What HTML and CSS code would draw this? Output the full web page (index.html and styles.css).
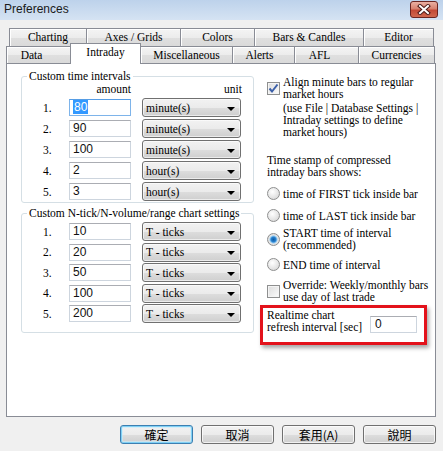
FILE: index.html
```html
<!DOCTYPE html>
<html lang="en">
<head>
    <meta charset="UTF-8">
    <title>Preferences</title>
    <link rel="stylesheet" href="styles.css">
</head>
<body>

    <!-- Title bar -->
    <div class="titlebar">
        <span class="title">Preferences</span>
        <div class="close-btn">
            <svg width="14" height="11" viewBox="0 0 14 11">
                <path d="M3 2 L11 9 M11 2 L3 9" stroke="#4a1a18" stroke-width="4" stroke-linecap="square"/>
                <path d="M3 2 L11 9 M11 2 L3 9" stroke="#fff" stroke-width="2" stroke-linecap="square"/>
            </svg>
        </div>
    </div>

    <!-- Tabs -->
    <div class="tabs">
        <div class="tab-row row-back">
            <div class="tab" style="width:78px">Charting</div>
            <div class="tab" style="width:95px">Axes / Grids</div>
            <div class="tab" style="width:75px">Colors</div>
            <div class="tab" style="width:110px">Bars &amp; Candles</div>
            <div class="tab" style="width:71px">Editor</div>
        </div>
        <div class="tab-row row-front">
            <div class="tab tab-data" style="width:65px">Data</div>
            <div class="tab active" style="width:71px">Intraday</div>
            <div class="tab" style="width:93px">Miscellaneous</div>
            <div class="tab tab-alerts" style="width:63px">Alerts</div>
            <div class="tab tab-afl" style="width:65px">AFL</div>
            <div class="tab" style="width:77px">Currencies</div>
        </div>
    </div>

    <div class="panel">
        <div class="col-left">

            <!-- Custom time intervals -->
            <fieldset class="group group-time">
                <legend>Custom time intervals</legend>
                <div class="group-body">
                    <div class="grid head">
                        <span></span>
                        <span class="right">amount</span>
                        <span class="right">unit</span>
                    </div>
                    <div class="grid rows">
                        <span class="num">1.</span>
                        <div class="field focused"><span class="selected">80</span></div>
                        <div class="combo"><span>minute(s)</span><i class="arrow"></i></div>

                        <span class="num">2.</span>
                        <div class="field">90</div>
                        <div class="combo"><span>minute(s)</span><i class="arrow"></i></div>

                        <span class="num">3.</span>
                        <div class="field">100</div>
                        <div class="combo"><span>minute(s)</span><i class="arrow"></i></div>

                        <span class="num">4.</span>
                        <div class="field">2</div>
                        <div class="combo"><span>hour(s)</span><i class="arrow"></i></div>

                        <span class="num">5.</span>
                        <div class="field">3</div>
                        <div class="combo"><span>hour(s)</span><i class="arrow"></i></div>
                    </div>
                </div>
            </fieldset>

            <!-- Custom N-tick settings -->
            <fieldset class="group group-tick">
                <legend>Custom N-tick/N-volume/range chart settings</legend>
                <div class="group-body">
                    <div class="grid rows">
                        <span class="num">1.</span>
                        <div class="field">10</div>
                        <div class="combo"><span>T - ticks</span><i class="arrow"></i></div>

                        <span class="num">2.</span>
                        <div class="field">20</div>
                        <div class="combo"><span>T - ticks</span><i class="arrow"></i></div>

                        <span class="num">3.</span>
                        <div class="field">50</div>
                        <div class="combo"><span>T - ticks</span><i class="arrow"></i></div>

                        <span class="num">4.</span>
                        <div class="field">100</div>
                        <div class="combo"><span>T - ticks</span><i class="arrow"></i></div>

                        <span class="num">5.</span>
                        <div class="field">200</div>
                        <div class="combo"><span>T - ticks</span><i class="arrow"></i></div>
                    </div>
                </div>
            </fieldset>
        </div>

        <div class="col-right">
            <div class="option">
                <span class="checkbox checked">
                    <svg width="11" height="11" viewBox="0 0 11 11">
                        <path d="M1.5 5.5 L4 8.5 L9.5 1.5" stroke="#3b5fa8" stroke-width="2" fill="none"/>
                    </svg>
                </span>
                <span>Align minute bars to regular<br>market hours</span>
            </div>
            <p class="note">(use File | Database Settings |<br>Intraday settings to define<br>market hours)</p>

            <p class="caption">Time stamp of compressed<br>intraday bars shows:</p>

            <div class="option radio-first">
                <span class="radio"></span>
                <span>time of FIRST tick inside bar</span>
            </div>
            <div class="option radio-last">
                <span class="radio"></span>
                <span>time of LAST tick inside bar</span>
            </div>
            <div class="option radio-start">
                <span class="radio on"></span>
                <span>START time of interval<br>(recommended)</span>
            </div>
            <div class="option radio-end">
                <span class="radio"></span>
                <span>END time of interval</span>
            </div>
            <div class="option override">
                <span class="checkbox"></span>
                <span>Override: Weekly/monthly bars<br>use day of last trade</span>
            </div>

            <!-- highlighted setting -->
            <div class="highlight">
                <span>Realtime chart<br>refresh interval [sec]</span>
                <div class="field refresh">0</div>
            </div>
        </div>
    </div>

    <div class="buttons">
        <button class="btn default">確定</button>
        <button class="btn">取消</button>
        <button class="btn">套用(A)</button>
        <button class="btn">說明</button>
    </div>

</body>
</html>
```

FILE: styles.css
```css
/* General Styles */
* {
    margin: 0;
    padding: 0;
    box-sizing: border-box;
}

body {
    width: 443px;
    height: 451px;
    overflow: hidden;
    background-color: #f0f0f0;
    font-family: 'Liberation Serif', serif;
    font-size: 11.5px;
    color: #000;
}

/* Title bar */
.titlebar {
    height: 20px;
    display: flex;
    justify-content: space-between;
    align-items: flex-start;
    padding-left: 4px;
    background: linear-gradient(#bdd2eb, #d5e3f3);
}

.title {
    font-family: 'Liberation Sans', sans-serif;
    font-size: 12px;
    line-height: 19px;
    color: #1a1a1a;
}

.close-btn {
    width: 28px;
    height: 17px;
    margin: 1px 5px 0 0;
    border: 1px solid #6a2521;
    border-radius: 3px;
    background: linear-gradient(#eab0a2, #d8816f 45%, #c34a36 55%, #d0684f);
    display: flex;
    align-items: center;
    justify-content: center;
}

/* Tabs */
.tabs {
    margin-top: 8px;
}

.tab-row {
    display: flex;
}

.row-back {
    height: 18px;
    padding-left: 9px;
}

.row-front {
    height: 17px;
    padding-left: 6px;
    align-items: flex-end;
}

.tab {
    height: 18px;
    margin-right: -1px;
    border: 1px solid #898c95;
    border-bottom: none;
    background: linear-gradient(#f4f4f4, #ececec 50%, #dfdfdf 52%, #dadada);
    box-shadow: inset 1px 1px 0 #fff;
    text-align: center;
    line-height: 17px;
    white-space: nowrap;
}

.row-front .tab {
    height: 17px;
    line-height: 16px;
}

.row-front .tab-data {
    padding-right: 14px;
}

.row-front .tab-alerts {
    padding-right: 8px;
}

.row-front .tab-afl {
    padding-right: 14px;
}

.row-front .tab.active {
    height: 21px;
    margin-bottom: -1px;
    background: #fff;
    box-shadow: none;
    position: relative;
    z-index: 2;
}

/* Main panel */
.panel {
    width: 430px;
    height: 354px;
    margin-left: 6px;
    padding-left: 14px;
    border: 1px solid #898c95;
    background-color: #fff;
    display: flex;
}

.col-left {
    width: 233px;
}

.group {
    border: 1px solid #d5dfe5;
    border-radius: 3px;
    padding: 0;
}

.group legend {
    margin-left: 5px;
    padding: 0 2px;
    line-height: 12px;
}

.group-time {
    margin-top: 6px;
}

.group-time .group-body {
    padding: 1px 0 1px 21px;
}

.group-tick {
    margin-top: 4px;
}

.group-tick .group-body {
    padding: 3px 0 9px 21px;
}

.grid {
    display: grid;
    grid-template-columns: 15px 62px 99px;
    column-gap: 11px;
}

.head {
    line-height: 12px;
}

.right {
    text-align: right;
}

.head .right:last-child {
    margin-right: -1px;
}

.rows {
    align-items: center;
}

.group-time .rows {
    margin-top: 3px;
    grid-auto-rows: 19px;
    row-gap: 2px;
}

.group-tick .rows {
    grid-auto-rows: 19px;
    row-gap: 1.5px;
}

.num {
    line-height: 12px;
}

.field {
    height: 17px;
    padding-left: 3px;
    border: 1px solid #cdd5de;
    border-top-color: #abadb3;
    background-color: #fff;
    font-family: 'Liberation Sans', sans-serif;
    font-size: 12px;
    line-height: 15px;
    color: #111;
}

.field.focused {
    border-color: #7eb4ea;
    border-top-color: #569de5;
}

.selected {
    background-color: #3399ff;
    color: #fff;
    padding: 0 1px;
}

.combo {
    height: 19px;
    padding: 0 5px 0 3px;
    border: 1px solid #707070;
    border-radius: 3px;
    background: linear-gradient(#f2f2f2, #ebebeb 50%, #dddddd 52%, #cfcfcf);
    box-shadow: inset 0 0 0 1px rgba(255, 255, 255, 0.6);
    display: flex;
    justify-content: space-between;
    align-items: center;
    line-height: 12px;
}

.arrow {
    width: 0;
    height: 0;
    border-left: 4px solid transparent;
    border-right: 4px solid transparent;
    border-top: 4px solid #000;
    margin-top: 2px;
}

/* Right column */
.col-right {
    margin-left: 13px;
    padding-top: 12px;
    line-height: 12px;
    white-space: nowrap;
}

.option {
    display: flex;
    align-items: center;
    gap: 3px;
}

.checkbox {
    width: 13px;
    height: 13px;
    flex-shrink: 0;
    border: 1px solid #8e8f8f;
    background: linear-gradient(135deg, #dcdcdc, #fbfbfb);
    box-shadow: inset 0 0 0 1px #f4f4f4;
    display: flex;
    align-items: center;
    justify-content: center;
}

.radio {
    width: 13px;
    height: 13px;
    flex-shrink: 0;
    border: 1px solid #8e8f8f;
    border-radius: 50%;
    background: radial-gradient(circle at 40% 35%, #ffffff, #e6e6e6 55%, #cfcfcf);
}

.radio.on {
    background: radial-gradient(circle, #0b5aa6 0, #2b83cf 2.5px, #8ec8f2 3.5px, #e6e6e6 4.5px, #cfcfcf);
}

.note {
    margin: 2px 0 0 16px;
}

.caption {
    margin-top: 16px;
}

.radio-first {
    margin-top: 9px;
}

.radio-last {
    margin-top: 9px;
}

.radio-start {
    margin-top: 5px;
}

.radio-end {
    margin-top: 7px;
}

.override {
    margin-top: 8px;
}

.highlight {
    width: 167px;
    margin: 2px 0 0 -7px;
    padding: 1px 7px 9px 4px;
    border: 3px solid #e3121b;
    box-shadow: 2px 3px 4px rgba(0, 0, 0, 0.35);
    display: flex;
    align-items: flex-end;
    justify-content: space-between;
}

.field.refresh {
    width: 47px;
    padding-left: 4px;
}

/* Dialog buttons */
.buttons {
    display: flex;
    justify-content: flex-end;
    gap: 8px;
    margin-top: 8px;
    padding-right: 7px;
}

.btn {
    width: 73px;
    height: 19px;
    border: 1px solid #707070;
    border-radius: 3px;
    background: linear-gradient(#f2f2f2, #ebebeb 50%, #dddddd 52%, #cfcfcf);
    box-shadow: inset 0 0 0 1px rgba(255, 255, 255, 0.7);
    font-family: 'Noto Sans CJK TC', sans-serif;
    font-size: 12px;
    line-height: 16px;
    color: #000;
}

.btn.default {
    border-color: #3c7fb1;
    background: linear-gradient(#f2f2f2, #ebebeb 50%, #dddddd 52%, #cfcfcf);
    box-shadow: inset 0 0 0 1px #7fd0f5, inset 0 0 0 2px rgba(200, 236, 252, 0.6);
}
```
